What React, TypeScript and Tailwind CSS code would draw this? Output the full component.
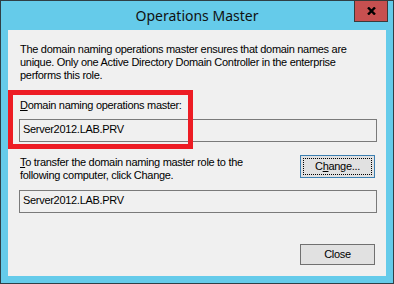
const body = { fontFamily: '"Liberation Sans", Arial, sans-serif' };

function TextBox({ value }: { value: string }) {
  return (
    <div className="ml-[11px] w-[358px] h-[23px] border border-[#7a7a7a] bg-[#f0f0f0] pl-[3px] pt-[3px] text-[11px] leading-[13px] text-black">
      {value}
    </div>
  );
}

export default function App() {
  return (
    <div
      className="relative w-[394px] h-[284px] bg-[#65cbea] border border-[#2f3f46] flex flex-col"
      style={body}
    >
      {/* title bar */}
      <div
        className="h-[29px] flex items-center justify-center text-[14px] text-[#111] pb-[1px]"
        style={{ fontFamily: '"Noto Sans", "Open Sans", sans-serif' }}
      >
        Operations Master
      </div>
      <div className="absolute right-[5px] top-[-1px] w-[34px] h-[22px] bg-[#c75050] border border-[#3a3a3a] flex items-center justify-center">
        <svg width="9" height="8" viewBox="0 0 9 8">
          <path d="M1 0.5 L8 7.5 M8 0.5 L1 7.5" stroke="#000" strokeWidth="2.4" />
        </svg>
      </div>

      {/* client area */}
      <div className="relative mx-[7px] h-[246px] bg-[#f0f0f0] flex flex-col text-[11px] leading-[13px] tracking-[-0.3px] text-black">
        <p className="pl-[12px] pt-[13px] pr-[10px]">
          The domain naming operations master ensures that domain names are unique. Only one Active
          Directory Domain Controller in the enterprise performs this role.
        </p>

        <div className="pl-[12px] mt-[17px]">
          <span className="underline">D</span>omain naming operations master:
        </div>
        <div className="mt-[7px]">
          <TextBox value="Server2012.LAB.PRV" />
        </div>

        <div className="flex items-start mt-[13px] pl-[12px] pr-[11px]">
          <div className="flex-1 pt-[1px]">
            <span className="underline">T</span>o transfer the domain naming master role to the
            <br />
            following computer, click Change.
          </div>
          <button className="w-[75px] h-[23px] border border-[#3c7fb1] bg-[#e1e1e1] p-[2px]">
            <div className="w-full h-full border border-dotted border-black flex items-center justify-center">
              C<span className="underline">h</span>ange...
            </div>
          </button>
        </div>

        <div className="mt-[8px]">
          <TextBox value="Server2012.LAB.PRV" />
        </div>

        <div className="flex justify-end pr-[11px] mt-[31px]">
          <button className="w-[75px] h-[21px] border border-[#707070] bg-[#e1e1e1] flex items-center justify-center">
            Close
          </button>
        </div>

        {/* red highlight annotation */}
        <div className="absolute left-0 top-[60px] w-[185px] h-[59px] border-[5px] border-[#ed1c24]" />
      </div>
    </div>
  );
}
